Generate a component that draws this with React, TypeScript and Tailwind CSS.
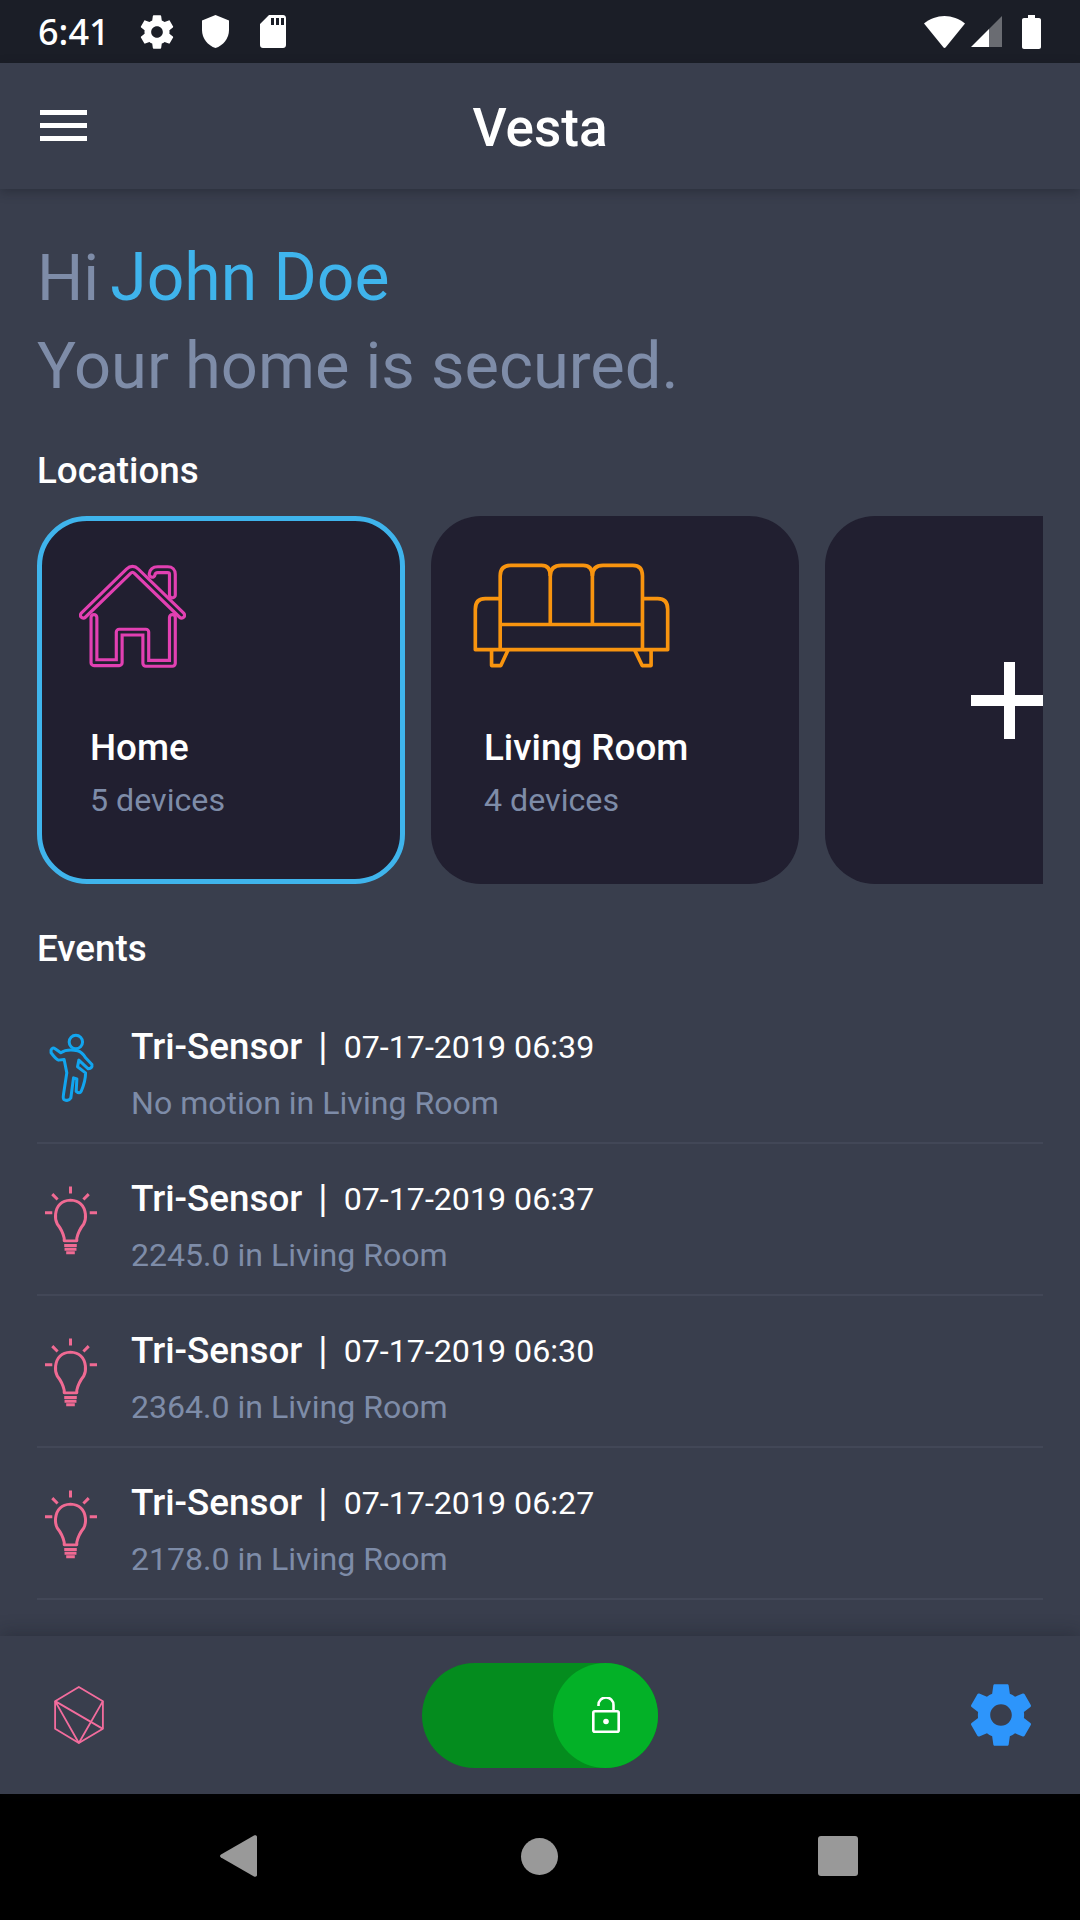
const muted = "text-[#7e8ca8]";

function GearPath() {
  return (
    <path d="M19.43 12.98c.04-.32.07-.64.07-.98s-.03-.66-.07-.98l2.11-1.65c.19-.15.24-.42.12-.64l-2-3.46c-.12-.22-.39-.3-.61-.22l-2.49 1c-.52-.4-1.08-.73-1.69-.98l-.38-2.65C14.46 2.18 14.25 2 14 2h-4c-.25 0-.46.18-.49.42l-.38 2.65c-.61.25-1.17.59-1.69.98l-2.49-1c-.23-.09-.49 0-.61.22l-2 3.46c-.13.22-.07.49.12.64l2.11 1.65c-.04.32-.07.65-.07.98s.03.66.07.98l-2.11 1.65c-.19.15-.24.42-.12.64l2 3.46c.12.22.39.3.61.22l2.49-1c.52.4 1.08.73 1.69.98l.38 2.65c.03.24.24.42.49.42h4c.25 0 .46-.18.49-.42l.38-2.65c.61-.25 1.17-.59 1.69-.98l2.49 1c.23.09.49 0 .61-.22l2-3.46c.12-.22.07-.49-.12-.64l-2.11-1.65zM12 15.5c-1.93 0-3.5-1.57-3.5-3.5s1.57-3.5 3.5-3.5 3.5 1.57 3.5 3.5-1.57 3.5-3.5 3.5z" />
  );
}

function StatusBar() {
  return (
    <div className="flex h-[63px] shrink-0 items-center bg-[#1b1e27] pl-[38px] pr-[39px] text-white">
      <span className="w-[68px] whitespace-nowrap font-['Noto_Sans',sans-serif] text-[36px] font-medium leading-none">6:41</span>
      <svg viewBox="0 0 24 24" className="ml-[31px] h-[40px] w-[40px] fill-white">
        <GearPath />
      </svg>
      <svg viewBox="0 0 27 33" className="ml-[25px] h-[33px] w-[27px] fill-white">
        <path d="M13.5 0 27 5.5V15c0 8.5-5.8 15.6-13.500 18C5.800 30.600 0 23.500 0 15V5.500z" />
      </svg>
      <svg viewBox="0 0 26 33" className="ml-[31px] h-[33px] w-[26px] fill-white">
        <path
          fillRule="evenodd"
          d="M9 0h14c1.700 0 3 1.300 3 3v27c0 1.700-1.300 3-3 3H3c-1.700 0-3-1.300-3-3V9zM11 3v7h3V3zM16 3v7h3V3zM21 3v7h3V3z"
        />
      </svg>
      <div className="flex-1" />
      <svg viewBox="0 0 41 32" className="h-[32px] w-[41px] fill-white">
        <path d="M20.500 0C28 0 35 2.800 41 7.500L21.500 31.500c-.5.600-1.500.600-2 0L0 7.500C6 2.800 13 0 20.500 0z" />
      </svg>
      <svg viewBox="0 0 31 31" className="ml-[6px] h-[31px] w-[31px]">
        <path d="M18 13 31 0v31H18z" fill="#6a6c72" />
        <path d="M18 13v18H0z" fill="#fff" />
      </svg>
      <svg viewBox="0 0 19 34" className="ml-[20px] h-[34px] w-[19px] fill-white">
        <path d="M6 0h7v3h4c1.100 0 2 .9 2 2v27c0 1.100-.9 2-2 2H2c-1.100 0-2-.9-2-2V5c0-1.100.9-2 2-2h4z" />
      </svg>
    </div>
  );
}

function Header() {
  return (
    <div className="relative z-10 flex h-[126px] shrink-0 items-center bg-[#393e4d] pt-[5px] shadow-[0_3px_10px_rgba(20,22,32,0.35)]">
      <div className="absolute left-[40px] top-[47px] flex w-[47px] flex-col gap-[8px]">
        <div className="h-[5px] bg-white" />
        <div className="h-[5px] bg-white" />
        <div className="h-[5px] bg-white" />
      </div>
      <h1 className="w-full text-center text-[53px] font-medium leading-none text-white">Vesta</h1>
    </div>
  );
}

function HomeIcon() {
  const body = "M222 352V488H298V396H378V490H458V352";
  const chimney = "M397 222Q399 208 414 208H444Q458 208 458 222V284";
  const roof = "M190 345L326 213Q338 201 350 213L486 345";
  return (
    <svg viewBox="178 188 320 316" className="h-[105px] w-[107px]" fill="none" strokeLinecap="round" strokeLinejoin="round">
      {[chimney, body, roof].map((d) => (
        <g key={d}>
          <path d={d} stroke="#e240b2" strokeWidth="27" />
          <path d={d} stroke="#211f30" strokeWidth="8" />
        </g>
      ))}
    </svg>
  );
}

function SofaIcon() {
  return (
    <svg viewBox="158 186 594 316" className="h-[105px] w-[197px]" fill="none" stroke="#f8940f" strokeWidth="11" strokeLinejoin="round">
      <path d="M240 447V225Q240 193 272 193H365Q391 193 391 225V371" />
      <path d="M391 225Q391 193 425 193H490Q518 193 518 225V371" />
      <path d="M518 225Q518 193 550 193H640Q669 193 669 225V447" />
      <path d="M240 371H669" />
      <path d="M240 293H195Q165 293 165 325V447H745V325Q745 293 715 293H669" />
      <path d="M214 447V495H242L264 447" />
      <path d="M645 447L668 495H695V447" />
    </svg>
  );
}

function PersonIcon() {
  return (
    <svg viewBox="84 71 140 212" className="h-[71px] w-[47px]" fill="none" stroke="#12a5ef" strokeWidth="9" strokeLinejoin="round" strokeLinecap="round">
      <circle cx="167" cy="98" r="20" />
      <path d="M93 122Q97 112 105 118L122 130Q140 118 172 124Q186 128 196 145L215 165Q217 176 204 178L176 152L172 172L196 190Q196 215 183 245Q178 254 168 245L170 208L160 205L152 265Q145 276 132 270Q128 268 130 255L140 190L132 150L115 152Q108 150 93 130Z" />
    </svg>
  );
}

function BulbIcon() {
  return (
    <svg viewBox="75 532 157 205" className="h-[69px] w-[52px]" fill="none" stroke="#f06a93" strokeWidth="9" strokeLinejoin="round">
      <path d="M152 532V553M97 555L113 571M207 555L191 571M75 611H97M210 611H232" />
      <path d="M133 696V688Q128 665 112 645Q105 632 107 615Q112 575 152 573Q192 575 197 615Q199 632 192 645Q176 665 171 688V696Z" />
      <path d="M133 710H171M134 721H170M139 732H165" />
    </svg>
  );
}

function LocationCard({ active, name, devices, icon }: { active?: boolean; name: string; devices: string; icon: React.ReactNode }) {
  return (
    <div
      className={
        active
          ? "flex h-[368px] w-[368px] shrink-0 flex-col rounded-[50px] border-[5px] border-[#3fb4ec] bg-[#211f30] pl-[48px] pt-[42px]"
          : "flex h-[368px] w-[368px] shrink-0 flex-col rounded-[50px] bg-[#211f30] pl-[53px] pt-[47px]"
      }
    >
      <div className="-ml-[11px] h-[105px]">{icon}</div>
      <div className="mt-[58px] text-[36.8px] font-medium leading-[44px] text-white">{name}</div>
      <div className={`mt-[11px] text-[32.2px] leading-[38px] ${muted}`}>{devices}</div>
    </div>
  );
}

type Event = { icon: "person" | "bulb"; date: string; text: string };

const events: Event[] = [
  { icon: "person", date: "07-17-2019 06:39", text: "No motion in Living Room" },
  { icon: "bulb", date: "07-17-2019 06:37", text: "2245.0 in Living Room" },
  { icon: "bulb", date: "07-17-2019 06:30", text: "2364.0 in Living Room" },
  { icon: "bulb", date: "07-17-2019 06:27", text: "2178.0 in Living Room" },
];

function EventRow({ event }: { event: Event }) {
  return (
    <div className="flex h-[152px] items-center border-b-2 border-[#424757]">
      <div className="flex w-[68px] justify-center pt-[3px]">{event.icon === "person" ? <PersonIcon /> : <BulbIcon />}</div>
      <div className="ml-[26px] pt-[14px]">
        <div className="flex items-center text-white">
          <span className="text-[36.8px] font-medium leading-[44px]">Tri-Sensor</span>
          <span className="mx-[16px] text-[38px] leading-[44px]">|</span>
          <span className="text-[32.2px] leading-[44px]">{event.date}</span>
        </div>
        <div className={`mt-[14px] text-[32.1px] leading-[40px] ${muted}`}>{event.text}</div>
      </div>
    </div>
  );
}

function BottomBar() {
  return (
    <div className="relative z-10 flex h-[158px] shrink-0 items-center bg-[#393e4d] pl-[54px] pr-[49px] shadow-[0_-4px_16px_rgba(20,22,32,0.3)]">
      <div className="flex-1">
        <svg viewBox="72 67 151 176" className="h-[58px] w-[50px]" fill="none" stroke="#f36c9d" strokeWidth="5.500" strokeLinejoin="round">
          <path d="M147 70L220 113V197L147 240L75 197V113Z" />
          <path d="M75 113L220 197M75 113L147 240M220 113L147 240" />
        </svg>
      </div>
      <div className="ml-[-5px] flex h-[105px] w-[236px] justify-end rounded-full bg-[#048c1e]">
        <div className="flex h-[105px] w-[105px] items-center justify-center rounded-full bg-[#03b127]">
          <svg viewBox="0 0 28 36" className="h-[36px] w-[28px]" fill="none" stroke="#fff" strokeWidth="2.600">
            <rect x="1.300" y="14.300" width="25.400" height="20.400" rx="1.500" />
            <path d="M6.500 9V8a7.500 7.500 0 0 1 15 0v6" />
            <circle cx="14" cy="24.500" r="2.800" fill="#fff" stroke="none" />
          </svg>
        </div>
      </div>
      <div className="flex flex-1 justify-end">
        <svg viewBox="0 0 24 24" className="-mr-[7px] h-[74px] w-[74px] fill-[#2d95fb]">
          <GearPath />
        </svg>
      </div>
    </div>
  );
}

function NavBar() {
  return (
    <div className="relative flex h-[126px] shrink-0 items-center bg-black pb-[2px] pl-[220px]">
      <svg viewBox="0 0 37 42" className="h-[42px] w-[37px] fill-[#999]">
        <path d="M1 19.500 34 .6c1.300-.7 3-.2 3 1.400v38c0 1.600-1.700 2.100-3 1.400L1 22.500c-1.300-.8-1.300-2.200 0-3z" />
      </svg>
      <div className="ml-[264px] h-[37px] w-[37px] rounded-full bg-[#999]" />
      <div className="ml-[260px] h-[40px] w-[40px] rounded-[3px] bg-[#999]" />
    </div>
  );
}

export default function App() {
  return (
    <div className="flex h-[1920px] w-[1080px] flex-col overflow-hidden bg-[#393e4d] font-['Roboto',sans-serif]">
      <StatusBar />
      <Header />
      <main className="min-h-0 flex-1 pl-[37px] pr-[37px] pt-[45px]">
        <div className={`text-[65px] leading-[88px] ${muted}`}>
          Hi <span className="ml-[-5px] text-[66px] text-[#3fb4ec]">John Doe</span>
        </div>
        <div className={`text-[65px] leading-[88px] ${muted}`}>Your home is secured.</div>
        <h2 className="mt-[39px] text-[36.8px] font-medium leading-[44px] text-white">Locations</h2>
        <div className="mt-[23px] flex gap-[26px] overflow-hidden">
          <LocationCard active name="Home" devices="5 devices" icon={<HomeIcon />} />
          <LocationCard name="Living Room" devices="4 devices" icon={<SofaIcon />} />
          <div className="flex h-[368px] w-[368px] shrink-0 items-center justify-center rounded-[50px] bg-[#211f30]">
            <svg viewBox="0 0 77 77" className="h-[77px] w-[77px] fill-white">
              <path d="M33 0h11v33h33v11H44v33H33V44H0V33h33z" />
            </svg>
          </div>
        </div>
        <h2 className="mt-[43px] text-[36.8px] font-medium leading-[44px] text-white">Events</h2>
        <div className="mt-[21px]">
          {events.map((e) => (
            <EventRow key={e.date} event={e} />
          ))}
        </div>
      </main>
      <BottomBar />
      <NavBar />
    </div>
  );
}
